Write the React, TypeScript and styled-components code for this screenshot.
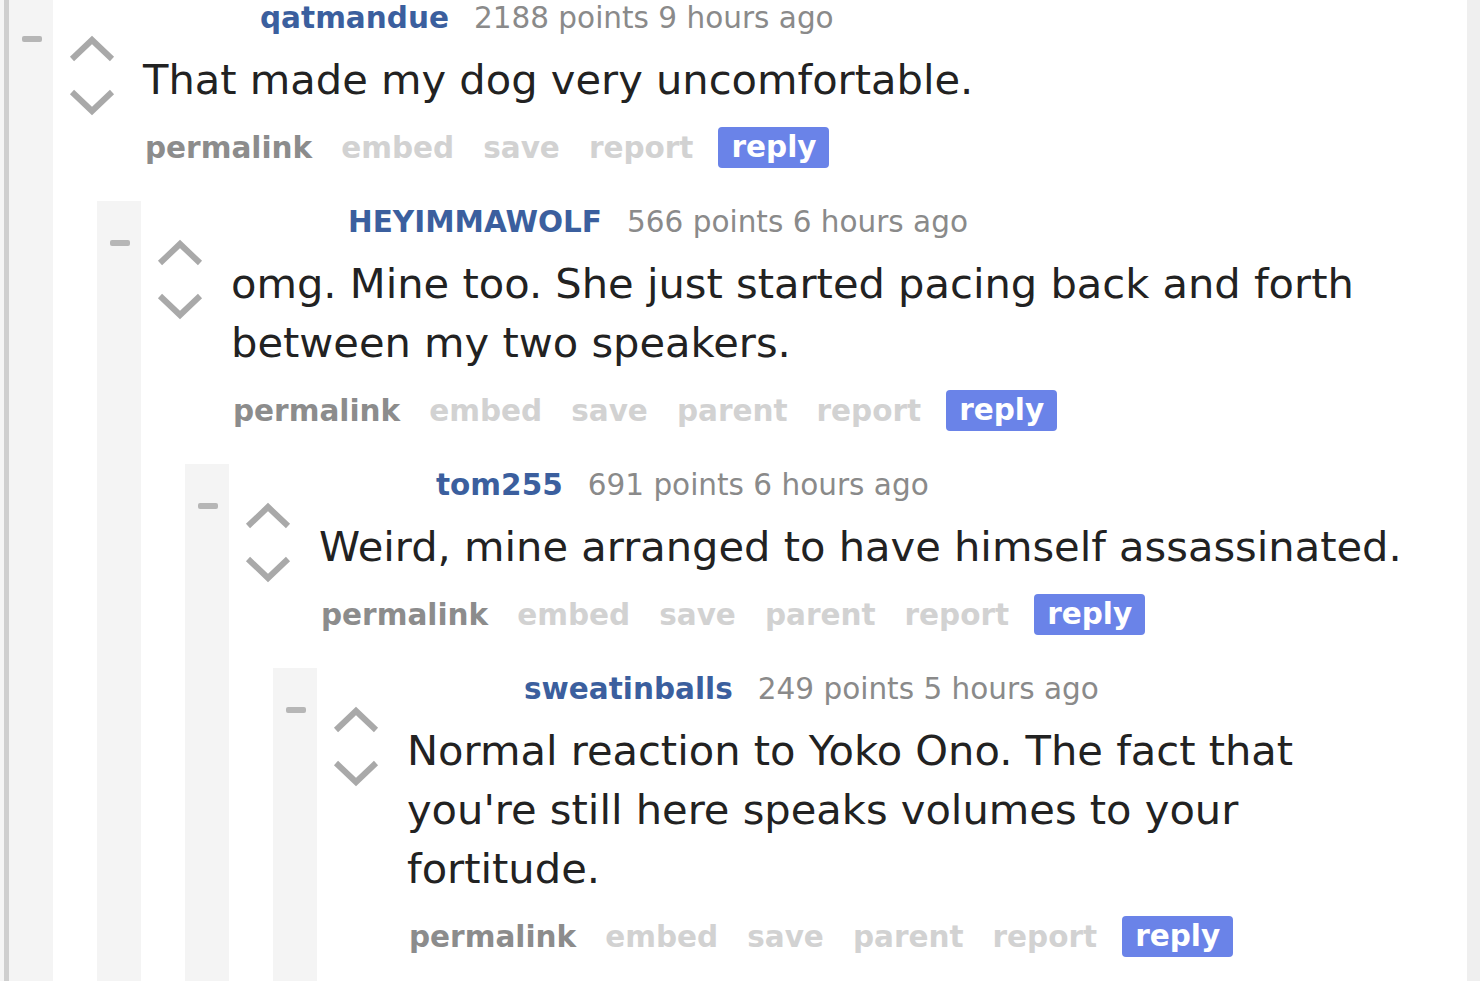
import React from 'react';
import styled, { createGlobalStyle } from 'styled-components';

const GlobalStyle = createGlobalStyle`
  html, body {
    margin: 0;
    padding: 0;
    background: #fff;
  }
  body {
    font-family: "DejaVu Sans", Verdana, sans-serif;
    overflow: hidden;
  }
`;

const Page = styled.div`
  display: flex;
  height: 981px;
  overflow: hidden;
  background: #fff;
`;

const LeftEdge = styled.div`
  width: 4px;
  flex-shrink: 0;
  background: #f5f5f5;
  border-right: 5px solid #cfcfcf;
`;

const RightEdge = styled.div`
  width: 13px;
  flex-shrink: 0;
  background: #efefef;
`;

const Thread = styled.div`
  flex: 1;
  min-width: 0;
  margin-top: -3px;
  display: flex;
  flex-direction: column;
`;

const CommentRow = styled.div`
  flex: 1;
  display: flex;
  align-items: stretch;
`;

const Strip = styled.div`
  width: 44px;
  flex-shrink: 0;
  background: #f4f4f4;
  padding-top: 39px;
`;

const Collapse = styled.div`
  width: 20px;
  height: 6px;
  margin-left: 13px;
  border-radius: 2px;
  background: #b6b6b6;
`;

const Main = styled.div`
  flex: 1;
  min-width: 0;
  display: flex;
  flex-direction: column;
`;

const Entry = styled.div`
  display: flex;
`;

const Votes = styled.div`
  width: 90px;
  flex-shrink: 0;
  padding: 38px 0 0 15px;
  box-sizing: border-box;
  display: flex;
  flex-direction: column;
  gap: 25px;
`;

const Content = styled.div`
  flex: 1;
  min-width: 0;
`;

const Tagline = styled.div`
  padding: 4px 0 0 117px;
  line-height: 34px;
  font-size: 29.5px;
  white-space: nowrap;
`;

const Author = styled.span`
  color: #3b5f9e;
  font-weight: bold;
  margin-right: 25px;
`;

const Score = styled.span`
  color: #8a8a8a;
`;

const Body = styled.div`
  margin-top: 15px;
  padding-right: 55px;
  font-size: 41.6px;
  line-height: 59px;
  color: #222;
`;

const Buttons = styled.div`
  display: flex;
  align-items: center;
  gap: 29px;
  height: 41px;
  margin-top: 18px;
  padding-left: 2px;
  font-size: 29.5px;
  font-weight: bold;
  white-space: nowrap;
`;

const Link = styled.span<{ $strong?: boolean }>`
  color: ${({ $strong }) => ($strong ? '#8c8c8c' : '#d2d2d2')};
`;

const ReplyButton = styled.span`
  margin-left: -4px;
  height: 41px;
  line-height: 41px;
  padding: 0 13px;
  border-radius: 4px;
  background: #6a83e8;
  color: #fff;
`;

const Children = styled.div`
  flex: 1;
  display: flex;
  flex-direction: column;
  margin: 33px 0 0 44px;
`;

const Arrow: React.FC<{ down?: boolean }> = ({ down }) => (
  <svg width="48" height="28" viewBox="0 0 48 28">
    <polyline
      points={down ? '4,4 24,23 44,4' : '4,24 24,5 44,24'}
      fill="none"
      stroke="#a9a9a9"
      strokeWidth="6"
    />
  </svg>
);

interface CommentData {
  author: string;
  points: number;
  age: string;
  text: string;
  hasParent?: boolean;
  children?: CommentData[];
}

const thread: CommentData = {
  author: 'qatmandue',
  points: 2188,
  age: '9 hours ago',
  text: 'That made my dog very uncomfortable.',
  children: [
    {
      author: 'HEYIMMAWOLF',
      points: 566,
      age: '6 hours ago',
      text: 'omg. Mine too. She just started pacing back and forth between my two speakers.',
      hasParent: true,
      children: [
        {
          author: 'tom255',
          points: 691,
          age: '6 hours ago',
          text: 'Weird, mine arranged to have himself assassinated.',
          hasParent: true,
          children: [
            {
              author: 'sweatinballs',
              points: 249,
              age: '5 hours ago',
              text: "Normal reaction to Yoko Ono. The fact that you're still here speaks volumes to your fortitude.",
              hasParent: true,
            },
          ],
        },
      ],
    },
  ],
};

const Comment: React.FC<{ data: CommentData }> = ({ data }) => (
  <CommentRow>
    <Strip>
      <Collapse />
    </Strip>
    <Main>
      <Entry>
        <Votes>
          <Arrow />
          <Arrow down />
        </Votes>
        <Content>
          <Tagline>
            <Author>{data.author}</Author>
            <Score>
              {data.points} points {data.age}
            </Score>
          </Tagline>
          <Body>{data.text}</Body>
          <Buttons>
            <Link $strong>permalink</Link>
            <Link>embed</Link>
            <Link>save</Link>
            {data.hasParent && <Link>parent</Link>}
            <Link>report</Link>
            <ReplyButton>reply</ReplyButton>
          </Buttons>
        </Content>
      </Entry>
      {data.children && (
        <Children>
          {data.children.map((c) => (
            <Comment key={c.author} data={c} />
          ))}
        </Children>
      )}
    </Main>
  </CommentRow>
);

const App: React.FC = () => (
  <>
    <GlobalStyle />
    <Page>
      <LeftEdge />
      <Thread>
        <Comment data={thread} />
      </Thread>
      <RightEdge />
    </Page>
  </>
);

export default App;
